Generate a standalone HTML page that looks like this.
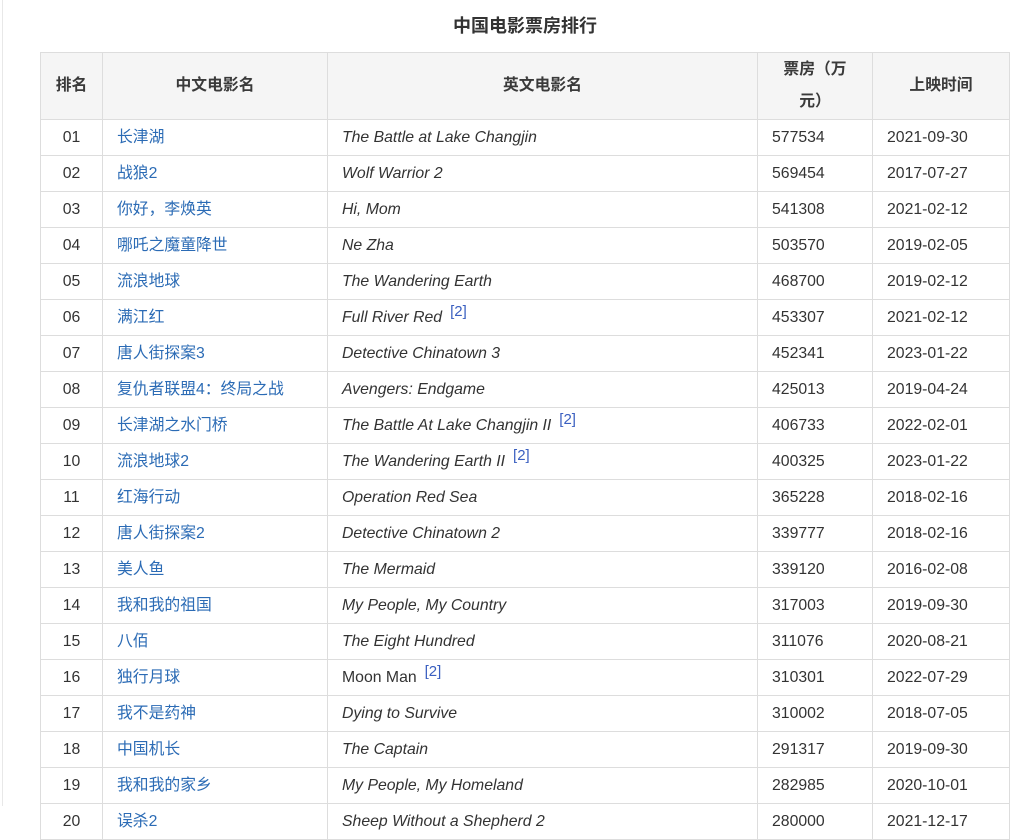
<!DOCTYPE html>
<html><head><meta charset="utf-8"><style>
body{margin:0;background:#fff;width:1023px;height:806px;overflow:hidden;font-family:"Liberation Sans","Noto Sans CJK SC",sans-serif;color:#333;position:relative}
.vl{position:absolute;left:2px;top:0;width:1px;height:806px;background:#e8e8e8}
h1{position:absolute;top:14px;left:0;width:1050px;text-align:center;font-size:18px;font-weight:bold;margin:0;line-height:24px;color:#333}
table{position:absolute;left:40px;top:52px;border-collapse:collapse;table-layout:fixed;width:969px;font-size:15.8px}
td,th{border:1px solid #ddd;height:35px;padding:0 14px;line-height:20px;white-space:nowrap;box-sizing:border-box}
td{height:36px}
th{background:#f5f5f5;height:67px;font-weight:bold;text-align:center;line-height:32px;color:#3a3a3a}
td:first-child{text-align:center;padding:0}
a{color:#2b6bb5;text-decoration:none}
td:nth-child(3){font-style:italic}
sup{color:#3a5fc0;font-style:normal;font-size:15px;vertical-align:6px;margin-left:8px;line-height:0}
</style></head><body>
<div class="vl"></div>
<h1>中国电影票房排行</h1>
<table>
<colgroup><col style="width:62px"><col style="width:225px"><col style="width:430px"><col style="width:115px"><col style="width:137px"></colgroup>
<tr><th>排名</th><th>中文电影名</th><th>英文电影名</th><th style="white-space:normal;padding:0 20px">票房（万元）</th><th>上映时间</th></tr>
<tr><td>01</td><td><a>长津湖</a></td><td>The Battle at Lake Changjin</td><td>577534</td><td>2021-09-30</td></tr>
<tr><td>02</td><td><a>战狼2</a></td><td>Wolf Warrior 2</td><td>569454</td><td>2017-07-27</td></tr>
<tr><td>03</td><td><a>你好，李焕英</a></td><td>Hi, Mom</td><td>541308</td><td>2021-02-12</td></tr>
<tr><td>04</td><td><a>哪吒之魔童降世</a></td><td>Ne Zha</td><td>503570</td><td>2019-02-05</td></tr>
<tr><td>05</td><td><a>流浪地球</a></td><td>The Wandering Earth</td><td>468700</td><td>2019-02-12</td></tr>
<tr><td>06</td><td><a>满江红</a></td><td>Full River Red<sup>[2]</sup></td><td>453307</td><td>2021-02-12</td></tr>
<tr><td>07</td><td><a>唐人街探案3</a></td><td>Detective Chinatown 3</td><td>452341</td><td>2023-01-22</td></tr>
<tr><td>08</td><td><a>复仇者联盟4：终局之战</a></td><td>Avengers: Endgame</td><td>425013</td><td>2019-04-24</td></tr>
<tr><td>09</td><td><a>长津湖之水门桥</a></td><td>The Battle At Lake Changjin II<sup>[2]</sup></td><td>406733</td><td>2022-02-01</td></tr>
<tr><td>10</td><td><a>流浪地球2</a></td><td>The Wandering Earth II<sup>[2]</sup></td><td>400325</td><td>2023-01-22</td></tr>
<tr><td>11</td><td><a>红海行动</a></td><td>Operation Red Sea</td><td>365228</td><td>2018-02-16</td></tr>
<tr><td>12</td><td><a>唐人街探案2</a></td><td>Detective Chinatown 2</td><td>339777</td><td>2018-02-16</td></tr>
<tr><td>13</td><td><a>美人鱼</a></td><td>The Mermaid</td><td>339120</td><td>2016-02-08</td></tr>
<tr><td>14</td><td><a>我和我的祖国</a></td><td>My People, My Country</td><td>317003</td><td>2019-09-30</td></tr>
<tr><td>15</td><td><a>八佰</a></td><td>The Eight Hundred</td><td>311076</td><td>2020-08-21</td></tr>
<tr><td>16</td><td><a>独行月球</a></td><td style="font-style:normal">Moon Man<sup>[2]</sup></td><td>310301</td><td>2022-07-29</td></tr>
<tr><td>17</td><td><a>我不是药神</a></td><td>Dying to Survive</td><td>310002</td><td>2018-07-05</td></tr>
<tr><td>18</td><td><a>中国机长</a></td><td>The Captain</td><td>291317</td><td>2019-09-30</td></tr>
<tr><td>19</td><td><a>我和我的家乡</a></td><td>My People, My Homeland</td><td>282985</td><td>2020-10-01</td></tr>
<tr><td>20</td><td><a>误杀2</a></td><td>Sheep Without a Shepherd 2</td><td>280000</td><td>2021-12-17</td></tr>
</table>
</body></html>
